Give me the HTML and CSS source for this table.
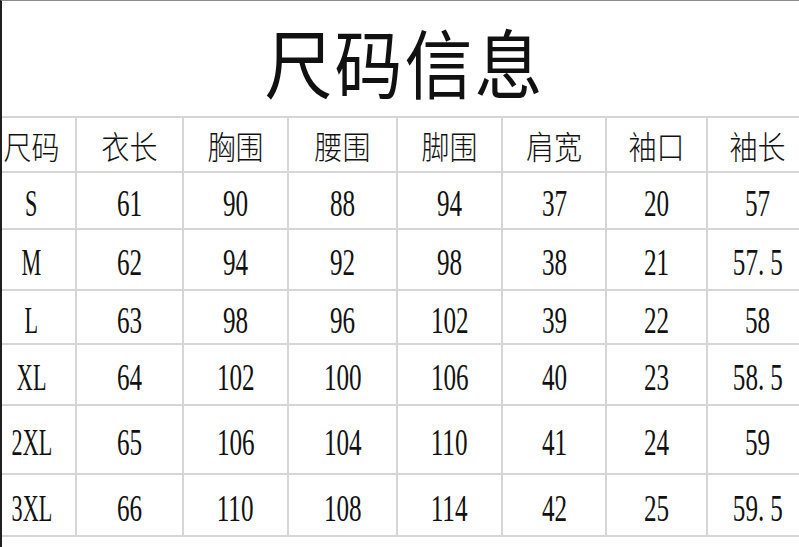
FILE: index.html
```html
<!DOCTYPE html>
<html lang="zh-CN">
<head>
<meta charset="utf-8">
<title>尺码信息</title>
<link rel="stylesheet" href="styles.css">
</head>
<body>
<div class="page">
  <h1 class="title"><span>尺码信息</span></h1>
  <div class="chart">
    <div class="cell head first"><span class="cjk">尺码</span></div>
    <div class="cell head"><span class="cjk">衣长</span></div>
    <div class="cell head"><span class="cjk">胸围</span></div>
    <div class="cell head"><span class="cjk">腰围</span></div>
    <div class="cell head"><span class="cjk">脚围</span></div>
    <div class="cell head"><span class="cjk">肩宽</span></div>
    <div class="cell head"><span class="cjk">袖口</span></div>
    <div class="cell head last"><span class="cjk">袖长</span></div>

    <div class="cell first"><span class="num size">S</span></div>
    <div class="cell"><span class="num">61</span></div>
    <div class="cell"><span class="num">90</span></div>
    <div class="cell"><span class="num">88</span></div>
    <div class="cell"><span class="num">94</span></div>
    <div class="cell"><span class="num">37</span></div>
    <div class="cell"><span class="num">20</span></div>
    <div class="cell last"><span class="num">57</span></div>

    <div class="cell first"><span class="num size">M</span></div>
    <div class="cell"><span class="num">62</span></div>
    <div class="cell"><span class="num">94</span></div>
    <div class="cell"><span class="num">92</span></div>
    <div class="cell"><span class="num">98</span></div>
    <div class="cell"><span class="num">38</span></div>
    <div class="cell"><span class="num">21</span></div>
    <div class="cell last"><span class="num">57<span class="dot">.</span>5</span></div>

    <div class="cell first"><span class="num size">L</span></div>
    <div class="cell"><span class="num">63</span></div>
    <div class="cell"><span class="num">98</span></div>
    <div class="cell"><span class="num">96</span></div>
    <div class="cell"><span class="num">102</span></div>
    <div class="cell"><span class="num">39</span></div>
    <div class="cell"><span class="num">22</span></div>
    <div class="cell last"><span class="num">58</span></div>

    <div class="cell first"><span class="num size">XL</span></div>
    <div class="cell"><span class="num">64</span></div>
    <div class="cell"><span class="num">102</span></div>
    <div class="cell"><span class="num">100</span></div>
    <div class="cell"><span class="num">106</span></div>
    <div class="cell"><span class="num">40</span></div>
    <div class="cell"><span class="num">23</span></div>
    <div class="cell last"><span class="num">58<span class="dot">.</span>5</span></div>

    <div class="cell first"><span class="num size">2XL</span></div>
    <div class="cell"><span class="num">65</span></div>
    <div class="cell"><span class="num">106</span></div>
    <div class="cell"><span class="num">104</span></div>
    <div class="cell"><span class="num">110</span></div>
    <div class="cell"><span class="num">41</span></div>
    <div class="cell"><span class="num">24</span></div>
    <div class="cell last"><span class="num">59</span></div>

    <div class="cell first"><span class="num size">3XL</span></div>
    <div class="cell"><span class="num">66</span></div>
    <div class="cell"><span class="num">110</span></div>
    <div class="cell"><span class="num">108</span></div>
    <div class="cell"><span class="num">114</span></div>
    <div class="cell"><span class="num">42</span></div>
    <div class="cell"><span class="num">25</span></div>
    <div class="cell last"><span class="num">59<span class="dot">.</span>5</span></div>
  </div>
</div>
</body>
</html>
```

FILE: styles.css
```css
html, body {
  margin: 0;
  padding: 0;
  background: #ffffff;
}

body {
  width: 799px;
  height: 547px;
  overflow: hidden;
}

.page {
  box-sizing: border-box;
  width: 799px;
  height: 547px;
  border-top: 1px solid #8c8c8c;
  border-left: 2px solid #1f1f1f;
  display: flex;
  flex-direction: column;
  color: #111111;
}

.title {
  margin: 0;
  height: 115px;
  display: flex;
  align-items: center;
  justify-content: center;
  padding-left: 8px;
  font-family: "Noto Sans CJK SC", "Noto Sans", sans-serif;
  font-weight: 400;
  font-size: 68px;
  line-height: 1;
  letter-spacing: 2px;
}

.title span {
  display: inline-block;
  transform: scaleY(1.1);
  margin-top: 4px;
}

.chart {
  display: grid;
  grid-template-columns: 73px 107px 105px 109px 105px 104px 101px 1fr;
  grid-template-rows: 55px 57px 61px 54px 61px 69px 62px;
  border-bottom: 2px solid #d6d6d6;
}

.cell {
  box-sizing: border-box;
  border-top: 2px solid #d6d6d6;
  border-left: 2px solid #d6d6d6;
  display: flex;
  align-items: center;
  justify-content: center;
  padding-top: 6px;
  overflow: hidden;
}

.cell.first {
  border-left: none;
  padding-right: 14px;
}

.cell.last {
  padding-left: 8px;
}

.cjk {
  display: inline-block;
  font-family: "Noto Sans CJK SC", "Noto Sans", sans-serif;
  font-weight: 300;
  font-size: 28px;
  line-height: 1;
  transform: scaleY(1.12);
}

.cell.head {
  padding-top: 2px;
}

.num {
  display: inline-block;
  font-family: "Liberation Serif", "Times New Roman", serif;
  font-size: 37px;
  line-height: 1;
  transform: scaleX(0.68);
  white-space: nowrap;
}

.num.size {
  transform: scaleX(0.6);
}

.dot {
  margin-right: 9px;
}
```
